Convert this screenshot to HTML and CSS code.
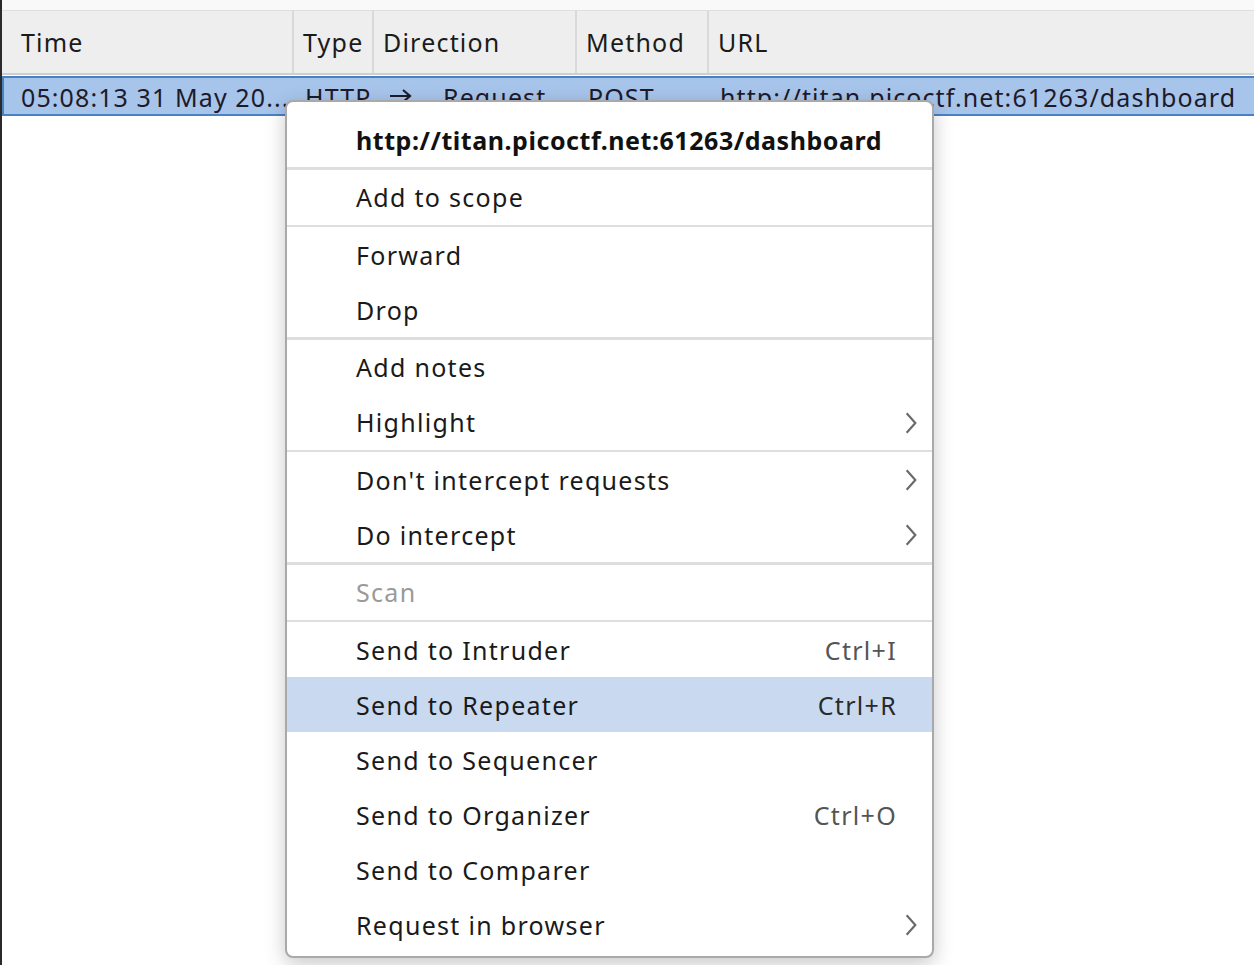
FILE: index.html
```html
<!DOCTYPE html>
<html>
<head>
<meta charset="utf-8">
<link rel="stylesheet" href="styles.css">
</head>
<body>
<div class="app">
  <div class="topstrip"></div>
  <div class="grid">
    <div class="row head">
      <div class="cell c-time">Time</div>
      <div class="cell c-type">Type</div>
      <div class="cell c-dir">Direction</div>
      <div class="cell c-method">Method</div>
      <div class="cell c-url">URL</div>
    </div>
    <div class="row sel">
      <div class="cell c-time">05:08:13 31 May 20...</div>
      <div class="cell c-type">HTTP</div>
      <div class="cell c-dir"><svg class="arrow" viewBox="0 0 24 16"><path d="M1 8 H21 M14 2 L21 8 L14 14"/></svg><span>Request</span></div>
      <div class="cell c-method">POST</div>
      <div class="cell c-url">http://titan.picoctf.net:61263/dashboard</div>
    </div>
  </div>

  <div class="menu">
    <div class="item title">http://titan.picoctf.net:61263/dashboard</div>
    <div class="sep"></div>
    <div class="item">Add to scope</div>
    <div class="sep"></div>
    <div class="item">Forward</div>
    <div class="item">Drop</div>
    <div class="sep"></div>
    <div class="item">Add notes</div>
    <div class="item">Highlight<svg class="chev" viewBox="0 0 12 24"><path d="M2 3 L10 12 L2 21"/></svg></div>
    <div class="sep"></div>
    <div class="item">Don't intercept requests<svg class="chev" viewBox="0 0 12 24"><path d="M2 3 L10 12 L2 21"/></svg></div>
    <div class="item">Do intercept<svg class="chev" viewBox="0 0 12 24"><path d="M2 3 L10 12 L2 21"/></svg></div>
    <div class="sep"></div>
    <div class="item disabled">Scan</div>
    <div class="sep"></div>
    <div class="item">Send to Intruder<span class="key light">Ctrl+I</span></div>
    <div class="item active">Send to Repeater<span class="key">Ctrl+R</span></div>
    <div class="item">Send to Sequencer</div>
    <div class="item">Send to Organizer<span class="key light">Ctrl+O</span></div>
    <div class="item">Send to Comparer</div>
    <div class="item">Request in browser<svg class="chev" viewBox="0 0 12 24"><path d="M2 3 L10 12 L2 21"/></svg></div>
  </div>
</div>
</body>
</html>
```
FILE: styles.css
```css
html, body {
  margin: 0;
  padding: 0;
  background: #ffffff;
}
body {
  font-family: "Noto Sans", "Open Sans", sans-serif;
  color: #1b1b1b;
}
.app {
  position: relative;
  width: 1254px;
  height: 965px;
  overflow: hidden;
  border-left: 2px solid #2a2a2a;
  box-sizing: border-box;
  background: #ffffff;
}
.topstrip {
  height: 10px;
  background: #f9f9f9;
  border-bottom: 1px solid #dedede;
}
.grid {
  display: flex;
  flex-direction: column;
}
.row {
  display: flex;
}
.head {
  height: 62px;
  background: #eeeeee;
  border-bottom: 2px solid #cfcfcf;
  font-size: 25px;
  letter-spacing: 1.2px;
}
.head .cell {
  display: flex;
  align-items: center;
  border-right: 2px solid #d9d9d9;
}
.cell {
  box-sizing: border-box;
  padding-left: 9px;
  white-space: nowrap;
  overflow: hidden;
}
.c-time { width: 292px; padding-left: 19px; }
.c-type { width: 80px; }
.c-dir { width: 203px; }
.c-method { width: 132px; }
.c-url { flex: 1; border-right: none !important; }
.sel {
  height: 40px;
  margin-top: 1px;
  background: #a7c4ea;
  border-top: 2px solid #4a80c6;
  border-bottom: 2px solid #4a80c6;
  border-left: 2px solid #4a80c6;
  box-sizing: border-box;
  font-size: 25px;
  letter-spacing: 1.1px;
  line-height: 38px;
  color: #1e1a2a;
}
.sel .c-time { padding-left: 17px; }
.sel .c-dir { display: flex; align-items: flex-start; }
.sel .c-dir .arrow {
  flex: none;
  width: 24px;
  height: 16px;
  margin: 10px 30px 0 4px;
}
.sel .c-dir .arrow path {
  fill: none;
  stroke: #1e1a2a;
  stroke-width: 2.2;
}
.menu {
  position: absolute;
  left: 283px;
  top: 100px;
  width: 649px;
  height: 858px;
  box-sizing: border-box;
  background: #ffffff;
  border: 2px solid #a9a9a9;
  border-radius: 8px;
  padding-top: 10px;
  box-shadow: 0 6px 20px rgba(0, 0, 0, 0.22);
  display: flex;
  flex-direction: column;
  font-size: 25px;
  letter-spacing: 1.3px;
}
.item {
  position: relative;
  height: 55px;
  flex: none;
  display: flex;
  align-items: center;
  padding-left: 69px;
  padding-right: 35px;
  color: #1a1a1a;
  white-space: nowrap;
}
.item.title {
  font-weight: bold;
  letter-spacing: 0.55px;
  color: #111111;
}
.item.disabled { color: #9a9a9a; }
.item.active { background: #c9daf0; }
.sep {
  height: 2.5px;
  flex: none;
  background: #dedede;
}
.key {
  margin-left: auto;
  color: #2a2a2a;
}
.key.light { color: #555555; }
.chev {
  position: absolute;
  right: 14px;
  top: 15px;
  width: 14px;
  height: 26px;
}
.chev path {
  fill: none;
  stroke: #6a6a6a;
  stroke-width: 2;
}
```
